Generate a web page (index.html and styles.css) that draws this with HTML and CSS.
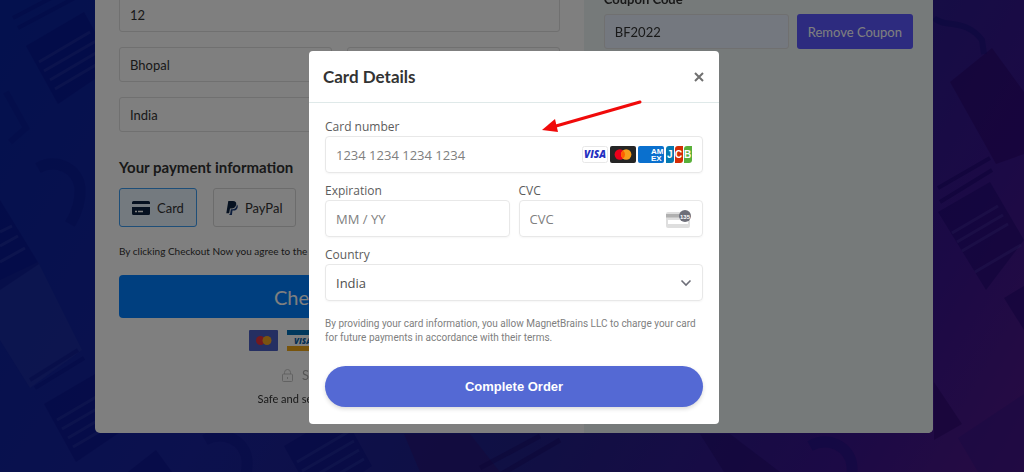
FILE: index.html
```html
<!DOCTYPE html>
<html lang="en">

<head>
    <meta charset="UTF-8">
    <meta name="viewport" content="width=device-width, initial-scale=1.0">
    <title>Checkout</title>
    <link rel="stylesheet" href="styles.css">
</head>

<body>
    <!-- page background -->
    <svg class="backdrop" viewBox="0 0 1024 472" preserveAspectRatio="xMidYMid slice" aria-hidden="true">
        <defs>
            <g id="package">
                <path d="M0 0L58 -34L88 20L32 58Z" fill="#000a80" opacity=".35" />
                <path d="M13 16L64 -14M18 25L70 -5M24 34L75 4M29 43L80 13" stroke="#3a48b0" stroke-width="3" opacity=".3" />
            </g>
            <path id="hook" d="M0 0C18 -10 40 0 42 20C43 34 38 46 32 56" fill="none" stroke="#000a80" stroke-width="11" opacity=".25" />
        </defs>
        <path d="M0 280L38 262L82 350L30 388L0 340Z" fill="#2c3aa4" opacity=".35" />
        <path d="M13 18L70 -12M18 28L82 -6" stroke="#000a80" stroke-width="4" opacity=".3" />
        <use href="#package" x="26" y="46" />
        <use href="#hook" x="38" y="168" />
        <path d="M0 200L39 264L0 290Z" fill="#000a80" opacity=".35" />
        <path d="M0 232L12 226M0 246L18 236M0 262L25 248" stroke="#3a48b0" stroke-width="3" opacity=".35" />
        <path d="M30 380L78 350M35 388L84 358" stroke="#000a80" stroke-width="4" opacity=".3" />
        <path d="M6 92L26 128L10 142" fill="none" stroke="#000a80" stroke-width="6" opacity=".2" />
        <use href="#package" x="44" y="404" />
        <path d="M128 472L156 450L172 472Z" fill="#000a80" opacity=".35" />
        <use href="#hook" x="205" y="440" />
        <use href="#package" x="284" y="446" />
        <path d="M404 434H470L500 472H420Z" fill="#30106c" opacity=".4" />
        <path d="M480 468L540 436M498 476L560 440" stroke="#170868" stroke-width="5" opacity=".4" />
        <path d="M730 434H700L724 472H780Z" fill="#1e0868" opacity=".4" />
        <use href="#hook" x="810" y="446" />
        <path d="M950 82L992 48L1024 92V154L996 164Z" fill="#260064" opacity=".45" />
        <path d="M934 18C944 28 966 18 982 40L984 54" fill="none" stroke="#000a70" stroke-width="6" opacity=".3" />
        <path d="M938 188L990 158M940 202L992 170" stroke="#140068" stroke-width="4" opacity=".45" />
        <path d="M938 212L990 182L1024 240L986 290Z" fill="#140068" opacity=".4" />
        <path d="M952 233L998 206M957 242L1003 215M962 251L1008 224M975 272L1021 245" stroke="#4a38a4" stroke-width="3" opacity=".4" />
        <path d="M1004 298L1024 286V330Z" fill="#140068" opacity=".4" />
        <path d="M934 382L962 424L934 440Z" fill="#200060" opacity=".4" />
        <path d="M958 438L1024 394V472H978Z" fill="#2a1088" opacity=".35" />
    </svg>

    <main class="page">
        <form class="checkout">
            <section class="checkout-main">
                <input class="field" type="text" aria-label="Address" value="12">
                <div class="field-row">
                    <input class="field" type="text" aria-label="City" value="Bhopal">
                    <input class="field" type="text" aria-label="Postcode">
                </div>
                <input class="field" type="text" aria-label="Country" value="India">

                <h2>Your payment information</h2>
                <div class="methods">
                    <button type="button" class="method active">
                        <svg width="18" height="14" viewBox="0 0 18 14" aria-hidden="true">
                            <path d="M1.500 0h15a1.500 1.500 0 0 1 1.500 1.500V3H0V1.500A1.500 1.500 0 0 1 1.500 0zM0 6h18v6.500a1.500 1.500 0 0 1-1.500 1.500h-15A1.500 1.500 0 0 1 0 12.500z" fill="#0c2340" />
                            <path d="M3 10.500h2M6 10.500h5" stroke="#fff" stroke-width="1.400" />
                        </svg>
                        Card
                    </button>
                    <button type="button" class="method">
                        <svg width="12" height="14" viewBox="0 0 12 14" aria-hidden="true">
                            <path d="M2.300 0h4.700c2.400 0 3.600 1.300 3.200 3.500C9.700 6.300 8 7.400 5.600 7.400H4l-.8 4.800H.3z" fill="#0c2340" />
                            <path d="M10.900 3.500c.8.700 1 1.700.8 2.700-.5 2.400-2 3.400-4.200 3.400h-1L5.900 14H3.300l.2-1.100h.6l.7-4.600h1.400c2.600 0 4.300-1.500 4.700-4.800z" fill="#1b3d7a" />
                        </svg>
                        PayPal
                    </button>
                </div>

                <p class="agree">By clicking Checkout Now you agree to the Terms of Service</p>
                <button type="button" class="checkout-btn">Checkout Now</button>

                <div class="brands">
                    <svg width="29" height="21" viewBox="0 0 29 21" aria-hidden="true">
                        <rect width="29" height="21" rx="1" fill="#4a5fc4" />
                        <circle cx="11.500" cy="10.500" r="4.500" fill="#e8323c" />
                        <circle cx="18" cy="10.500" r="4.500" fill="#f5a623" />
                    </svg>
                    <svg width="29" height="21" viewBox="0 0 29 21" aria-hidden="true">
                        <rect width="29" height="21" fill="#fff" />
                        <rect width="29" height="5" fill="#0070ba" />
                        <rect y="16" width="29" height="5" fill="#f0a818" />
                        <text class="brand-text" x="7" y="13.500" font-size="8" fill="#0a5fa8">VISA</text>
                    </svg>
                    <svg width="29" height="21" viewBox="0 0 29 21" aria-hidden="true"><rect width="29" height="21" rx="1" fill="#0071ce" /></svg>
                    <svg width="29" height="21" viewBox="0 0 29 21" aria-hidden="true"><rect width="29" height="21" rx="1" fill="#f5f5f5" /></svg>
                    <svg width="29" height="21" viewBox="0 0 29 21" aria-hidden="true"><rect width="29" height="21" rx="1" fill="#1b3d7a" /></svg>
                </div>

                <div class="ssl">
                    <svg width="11" height="13" viewBox="0 0 11 13" fill="none" stroke="#c4c4c4" aria-hidden="true">
                        <rect x=".5" y="5" width="10" height="7.500" rx="1" />
                        <path d="M2.500 5V3.500a3 3 0 0 1 6 0V5M5.500 8v2" />
                    </svg>
                    <span>SSL Secured Site</span>
                </div>
                <p class="safe">Safe and secure payment gateway</p>
            </section>

            <aside class="checkout-side">
                <label for="coupon">Coupon Code</label>
                <div class="coupon-row">
                    <input class="coupon" id="coupon" type="text" value="BF2022">
                    <button type="button" class="remove">Remove Coupon</button>
                </div>
            </aside>
        </form>
    </main>

    <div class="overlay">
        <form class="modal" role="dialog" aria-labelledby="modal-title">
            <header class="modal-header">
                <h1 id="modal-title">Card Details</h1>
                <button type="button" class="close" aria-label="Close">
                    <svg width="10" height="10" viewBox="0 0 10 10" aria-hidden="true">
                        <path d="M1 1l8 8M9 1l-8 8" stroke="#707070" stroke-width="2" />
                    </svg>
                </button>
            </header>

            <div class="modal-body">
                <div class="group">
                    <label for="number">Card number</label>
                    <div class="control">
                        <input id="number" type="text" placeholder="1234 1234 1234 1234">
                        <div class="cards">
                            <svg width="26" height="17" viewBox="0 0 26 17" aria-hidden="true">
                                <rect x=".5" y=".5" width="25" height="16" rx="2" fill="#fff" stroke="#e8e8e8" />
                                <text class="brand-text" x="2" y="12" font-size="10" fill="#2430c0">VISA</text>
                            </svg>
                            <svg width="26" height="17" viewBox="0 0 26 17" aria-hidden="true">
                                <rect width="26" height="17" rx="2" fill="#252525" />
                                <circle cx="9.800" cy="8.500" r="5.200" fill="#eb001b" />
                                <circle cx="16.200" cy="8.500" r="5.200" fill="#f79e1b" />
                                <path d="M13 4.400a5.200 5.200 0 0 1 0 8.200a5.200 5.200 0 0 1 0-8.200z" fill="#ff5f00" />
                            </svg>
                            <svg width="26" height="17" viewBox="0 0 26 17" aria-hidden="true">
                                <rect width="26" height="17" rx="2" fill="#0a70ce" />
                                <text class="amex-text" x="13" y="8">AM</text>
                                <text class="amex-text" x="13" y="15">EX</text>
                            </svg>
                            <svg width="26" height="17" viewBox="0 0 26 17" aria-hidden="true">
                                <path d="M3 0h5v14a3 3 0 0 1-3 3H0V3a3 3 0 0 1 3-3z" fill="#047ab1" />
                                <path d="M12 0h5v14a3 3 0 0 1-3 3H9V3a3 3 0 0 1 3-3z" fill="#d42d06" />
                                <path d="M21 0h5v14a3 3 0 0 1-3 3h-5V3a3 3 0 0 1 3-3z" fill="#59b03a" />
                                <text class="jcb-text" x="1" y="12">J</text>
                                <text class="jcb-text" x="9" y="12">C</text>
                                <text class="jcb-text" x="18" y="12">B</text>
                            </svg>
                        </div>
                    </div>
                </div>

                <div class="group-row">
                    <div class="group">
                        <label for="expiry">Expiration</label>
                        <div class="control">
                            <input id="expiry" type="text" placeholder="MM / YY">
                        </div>
                    </div>
                    <div class="group">
                        <label for="cvc">CVC</label>
                        <div class="control">
                            <input id="cvc" type="text" placeholder="CVC">
                            <svg width="26" height="18" viewBox="0 0 26 18" aria-hidden="true">
                                <rect x="0" y="2" width="24" height="16" rx="2" fill="#dedede" />
                                <path d="M0 4h24v3.500H0z" fill="#b0b0b0" />
                                <path d="M2 10h20v4H2z" fill="#fff" />
                                <circle cx="19" cy="6" r="6" fill="#6d6e78" />
                                <text class="cvc-text" x="19" y="8.500">135</text>
                            </svg>
                        </div>
                    </div>
                </div>

                <div class="group">
                    <label for="country">Country</label>
                    <div class="control">
                        <select id="country">
                            <option>India</option>
                        </select>
                        <svg class="chevron" width="12" height="8" viewBox="0 0 12 8" aria-hidden="true">
                            <path d="M1.500 1.500L6 6l4.500-4.500" fill="none" stroke="#6d6e78" stroke-width="1.600" />
                        </svg>
                    </div>
                </div>

                <p class="terms">By providing your card information, you allow MagnetBrains LLC to charge your card for future payments in accordance with their terms.</p>
                <button type="button" class="complete">Complete Order</button>
            </div>

            <svg class="arrow" width="100" height="34" viewBox="0 0 100 34" aria-hidden="true">
                <path d="M98 3L14 27" stroke="#f00a0a" stroke-width="3" stroke-linecap="round" />
                <path d="M0 31L13 20L16 33Z" fill="#f00a0a" />
            </svg>
        </form>
    </div>
</body>

</html>
```
FILE: styles.css
```css
* {
    box-sizing: border-box;
}

body {
    margin: 0;
    height: 100vh;
    overflow: hidden;
    background: linear-gradient(120deg, #08229c 0%, #18229c 35%, #202088 60%, #38148c 85%, #501886 100%);
    font-family: Lato, "Liberation Sans", sans-serif;
    color: #333;
}

h1,
h2,
p {
    margin: 0;
}

input,
select,
button {
    font-family: inherit;
    color: inherit;
}

.backdrop {
    position: fixed;
    inset: 0;
    width: 100%;
    height: 100%;
}

/* checkout page, scrolled to its end */
.page {
    position: relative;
    height: 100vh;
    display: flex;
    flex-direction: column;
    justify-content: flex-end;
    align-items: center;
    padding: 0 0 39px 4px;
}

.checkout {
    flex-shrink: 0;
    width: 90%;
    max-width: 838px;
    display: grid;
    grid-template-columns: 7fr 5fr;
    background: #fff;
    border-radius: 5px;
    overflow: hidden;
}

.checkout-main {
    display: flex;
    flex-direction: column;
    padding: 24px;
}

.field,
.coupon {
    width: 100%;
    min-width: 0;
    height: 35px;
    padding: 0 10px;
    border: 1px solid #e0e0e0;
    border-radius: 3px;
    background: #fff;
    font-size: 13px;
}

.field {
    margin-bottom: 15px;
}

.field-row {
    display: grid;
    grid-template-columns: 1fr 1fr;
    gap: 15px;
}

.checkout-main h2 {
    margin-top: 8px;
    font-size: 15px;
    line-height: 24px;
}

.methods {
    display: flex;
    gap: 16px;
    margin-top: 9px;
}

.method {
    display: flex;
    align-items: center;
    gap: 7px;
    height: 39px;
    padding: 0 12px;
    border: 1px solid #d8d8d8;
    border-radius: 3px;
    background: #fff;
    font-size: 13px;
}

.method.active {
    border-color: #3c9cf0;
    background: #e9f4ff;
}

.agree {
    margin-top: 14px;
    font-size: 10px;
    line-height: 20px;
}

.checkout-btn {
    height: 43px;
    margin-top: 14px;
    border: none;
    border-radius: 4px;
    background: #007fff;
    color: #fff;
    font-size: 20px;
}

.brands {
    display: flex;
    justify-content: center;
    gap: 9px;
    margin-top: 12px;
}

.brand-text {
    font-family: "Open Sans", sans-serif;
    font-weight: 800;
    font-style: italic;
}

.ssl {
    display: flex;
    justify-content: center;
    align-items: center;
    gap: 9px;
    margin-top: 14px;
    color: #aaa;
    font-size: 13px;
    line-height: 20px;
}

.safe {
    margin-top: 4px;
    font-size: 11px;
    line-height: 20px;
    text-align: center;
}

.checkout-side {
    padding: 16px 20px;
    background: #edf5f5;
}

.checkout-side label {
    display: block;
    font-size: 13px;
    font-weight: bold;
    line-height: 20px;
}

.coupon-row {
    display: flex;
    gap: 8px;
    margin-top: 5px;
}

.coupon {
    flex: 1;
    background: #e8f0fe;
}

.remove {
    height: 35px;
    padding: 0 11px;
    border: none;
    border-radius: 3px;
    background: #5a56ff;
    color: #fff;
    font-size: 13px;
}

/* card details dialog */
.overlay {
    position: fixed;
    inset: 0;
    display: flex;
    justify-content: center;
    align-items: center;
    padding: 3px 0 0 4px;
    background: rgba(0, 0, 0, .5);
}

.modal {
    position: relative;
    width: 100%;
    max-width: 410px;
    border-radius: 4px;
    background: #fff;
    font-family: "Open Sans", "Noto Sans", sans-serif;
}

.modal-header {
    display: flex;
    justify-content: space-between;
    align-items: center;
    height: 52px;
    padding: 0 14px;
    border-bottom: 1px solid #dfe9e9;
}

.modal-header h1 {
    font-family: Lato, sans-serif;
    font-size: 17px;
}

.close {
    display: flex;
    padding: 1px;
    border: none;
    background: none;
}

.modal-body {
    padding: 15px 16px 17px;
}

.group {
    min-width: 0;
    margin-bottom: 9px;
}

.group label {
    display: block;
    color: #5c5c5c;
    font-size: 12px;
    line-height: 18px;
}

.group-row {
    display: grid;
    grid-template-columns: 1fr 1fr;
    gap: 9px;
}

.control {
    display: flex;
    align-items: center;
    height: 37px;
    padding-right: 10px;
    border: 1px solid #e8e8e8;
    border-radius: 4px;
    box-shadow: 0 1px 2px rgba(0, 0, 0, .04);
}

.control input,
.control select {
    flex: 1;
    min-width: 0;
    height: 100%;
    padding: 0 10px;
    border: none;
    background: none;
    appearance: none;
    color: #505050;
    font-size: 13px;
}

.control input::placeholder {
    color: #808080;
}

.cards {
    display: flex;
    gap: 2px;
}

.amex-text,
.jcb-text,
.cvc-text {
    font-family: "Liberation Sans", sans-serif;
    font-weight: bold;
    fill: #fff;
}

.amex-text {
    font-size: 8px;
}

.jcb-text {
    font-size: 10px;
}

.cvc-text {
    font-size: 6px;
    text-anchor: middle;
}

.terms {
    margin-top: 16px;
    color: #808080;
    font-family: Roboto, sans-serif;
    font-size: 10px;
    line-height: 14px;
}

.complete {
    width: 100%;
    height: 41px;
    margin-top: 21px;
    border: none;
    border-radius: 21px;
    background: #5469d4;
    box-shadow: 0 2px 4px rgba(0, 0, 0, .15);
    color: #fff;
    font-family: "Liberation Sans", sans-serif;
    font-size: 13px;
    font-weight: bold;
}

.arrow {
    position: absolute;
    top: 48px;
    right: 77px;
}
```
